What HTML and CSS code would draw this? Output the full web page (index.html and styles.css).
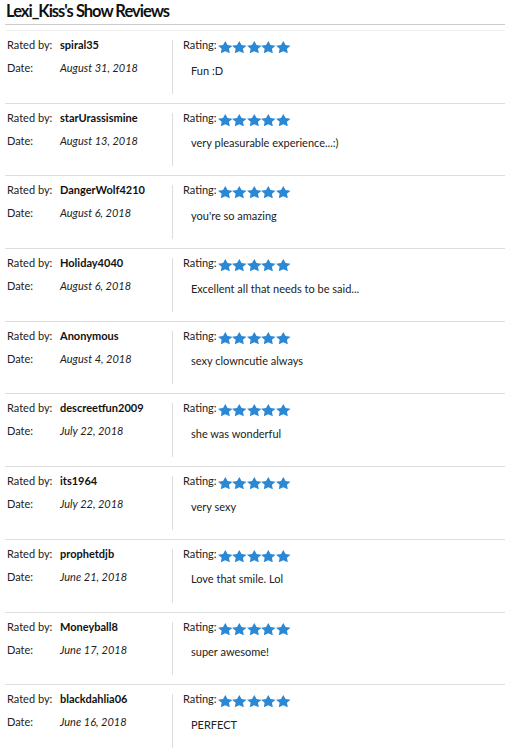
FILE: index.html
```html
<!DOCTYPE html>
<html lang="en">
  <head>
    <meta charset="UTF-8" />
    <meta name="viewport" content="width=device-width, initial-scale=1.0" />
    <title>Lexi_Kiss's Show Reviews</title>
    <link rel="stylesheet" href="styles.css">
  </head>
  <body>
    <svg width="0" height="0" class="defs">
      <symbol id="star" viewBox="2 2 20 19.3" preserveAspectRatio="none">
        <path d="M12 2l3.09 6.26L22 9.27l-5 4.87 1.18 6.88L12 17.77l-6.18 3.25L7 14.14 2 9.27l6.91-1.01z" />
      </symbol>
    </svg>

    <div class="page">
      <h1 class="title">Lexi_Kiss's Show Reviews</h1>

      <div class="reviews">
        <div class="review">
          <div class="meta">
            <div class="line"><span class="label">Rated by:</span><span class="user">spiral35</span></div>
            <div class="line"><span class="label">Date:</span><em>August 31, 2018</em></div>
          </div>
          <div class="body">
            <div class="rating">Rating:<span class="stars"><svg><use href="#star"/></svg><svg><use href="#star"/></svg><svg><use href="#star"/></svg><svg><use href="#star"/></svg><svg><use href="#star"/></svg></span></div>
            <p class="comment">Fun :D</p>
          </div>
        </div>

        <div class="review">
          <div class="meta">
            <div class="line"><span class="label">Rated by:</span><span class="user">starUrassismine</span></div>
            <div class="line"><span class="label">Date:</span><em>August 13, 2018</em></div>
          </div>
          <div class="body">
            <div class="rating">Rating:<span class="stars"><svg><use href="#star"/></svg><svg><use href="#star"/></svg><svg><use href="#star"/></svg><svg><use href="#star"/></svg><svg><use href="#star"/></svg></span></div>
            <p class="comment">very pleasurable experience...:)</p>
          </div>
        </div>

        <div class="review">
          <div class="meta">
            <div class="line"><span class="label">Rated by:</span><span class="user">DangerWolf4210</span></div>
            <div class="line"><span class="label">Date:</span><em>August 6, 2018</em></div>
          </div>
          <div class="body">
            <div class="rating">Rating:<span class="stars"><svg><use href="#star"/></svg><svg><use href="#star"/></svg><svg><use href="#star"/></svg><svg><use href="#star"/></svg><svg><use href="#star"/></svg></span></div>
            <p class="comment">you're so amazing</p>
          </div>
        </div>

        <div class="review">
          <div class="meta">
            <div class="line"><span class="label">Rated by:</span><span class="user">Holiday4040</span></div>
            <div class="line"><span class="label">Date:</span><em>August 6, 2018</em></div>
          </div>
          <div class="body">
            <div class="rating">Rating:<span class="stars"><svg><use href="#star"/></svg><svg><use href="#star"/></svg><svg><use href="#star"/></svg><svg><use href="#star"/></svg><svg><use href="#star"/></svg></span></div>
            <p class="comment">Excellent all that needs to be said...</p>
          </div>
        </div>

        <div class="review">
          <div class="meta">
            <div class="line"><span class="label">Rated by:</span><span class="user">Anonymous</span></div>
            <div class="line"><span class="label">Date:</span><em>August 4, 2018</em></div>
          </div>
          <div class="body">
            <div class="rating">Rating:<span class="stars"><svg><use href="#star"/></svg><svg><use href="#star"/></svg><svg><use href="#star"/></svg><svg><use href="#star"/></svg><svg><use href="#star"/></svg></span></div>
            <p class="comment">sexy clowncutie always</p>
          </div>
        </div>

        <div class="review">
          <div class="meta">
            <div class="line"><span class="label">Rated by:</span><span class="user">descreetfun2009</span></div>
            <div class="line"><span class="label">Date:</span><em>July 22, 2018</em></div>
          </div>
          <div class="body">
            <div class="rating">Rating:<span class="stars"><svg><use href="#star"/></svg><svg><use href="#star"/></svg><svg><use href="#star"/></svg><svg><use href="#star"/></svg><svg><use href="#star"/></svg></span></div>
            <p class="comment">she was wonderful</p>
          </div>
        </div>

        <div class="review">
          <div class="meta">
            <div class="line"><span class="label">Rated by:</span><span class="user">its1964</span></div>
            <div class="line"><span class="label">Date:</span><em>July 22, 2018</em></div>
          </div>
          <div class="body">
            <div class="rating">Rating:<span class="stars"><svg><use href="#star"/></svg><svg><use href="#star"/></svg><svg><use href="#star"/></svg><svg><use href="#star"/></svg><svg><use href="#star"/></svg></span></div>
            <p class="comment">very sexy</p>
          </div>
        </div>

        <div class="review">
          <div class="meta">
            <div class="line"><span class="label">Rated by:</span><span class="user">prophetdjb</span></div>
            <div class="line"><span class="label">Date:</span><em>June 21, 2018</em></div>
          </div>
          <div class="body">
            <div class="rating">Rating:<span class="stars"><svg><use href="#star"/></svg><svg><use href="#star"/></svg><svg><use href="#star"/></svg><svg><use href="#star"/></svg><svg><use href="#star"/></svg></span></div>
            <p class="comment">Love that smile. Lol</p>
          </div>
        </div>

        <div class="review">
          <div class="meta">
            <div class="line"><span class="label">Rated by:</span><span class="user">Moneyball8</span></div>
            <div class="line"><span class="label">Date:</span><em>June 17, 2018</em></div>
          </div>
          <div class="body">
            <div class="rating">Rating:<span class="stars"><svg><use href="#star"/></svg><svg><use href="#star"/></svg><svg><use href="#star"/></svg><svg><use href="#star"/></svg><svg><use href="#star"/></svg></span></div>
            <p class="comment">super awesome!</p>
          </div>
        </div>

        <div class="review">
          <div class="meta">
            <div class="line"><span class="label">Rated by:</span><span class="user">blackdahlia06</span></div>
            <div class="line"><span class="label">Date:</span><em>June 16, 2018</em></div>
          </div>
          <div class="body">
            <div class="rating">Rating:<span class="stars"><svg><use href="#star"/></svg><svg><use href="#star"/></svg><svg><use href="#star"/></svg><svg><use href="#star"/></svg><svg><use href="#star"/></svg></span></div>
            <p class="comment">PERFECT</p>
          </div>
        </div>
      </div>
    </div>
  </body>
</html>
```

FILE: styles.css
```css
body {
  margin: 0;
  font-family: Lato, "Liberation Sans", sans-serif;
  font-size: 11px;
  color: #222;
  background: #fff;
}

.defs {
  position: absolute;
}

.page {
  padding-left: 5px;
}

.title {
  margin: 0;
  padding: 3px 0 0 1px;
  height: 21px;
  font-size: 16.5px;
  line-height: 17px;
  font-weight: bold;
  letter-spacing: -1px;
  color: #111;
  border-bottom: 1px solid #ccc;
}

.reviews {
  margin-top: 5px;
  border-top: 1px solid #f2f2f2;
}

/* one review row */
.review {
  display: flex;
  padding: 9px 0 9px;
  border-bottom: 1px solid #ddd;
}

.meta {
  width: 165px;
  margin-top: -1px;
  padding-left: 2px;
  display: flex;
  flex-direction: column;
  gap: 11px;
}

.line {
  display: flex;
  line-height: 12px;
}

.label {
  width: 53px;
}

.user {
  font-weight: bold;
  color: #111;
}

.meta em {
  color: #222;
}

.body {
  flex: 1;
  height: 53.7px;
  border-left: 1px solid #ddd;
  padding-left: 10px;
}

.rating {
  display: flex;
  align-items: flex-start;
  margin-top: -1px;
  line-height: 12px;
  letter-spacing: 0;
}

.stars {
  display: flex;
  margin-left: 1px;
  margin-top: 2px;
}

.stars svg {
  width: 14.6px;
  height: 12.5px;
  fill: #2b88d4;
}

.comment {
  margin: 11px 0 0 8px;
  line-height: 12px;
}
```
